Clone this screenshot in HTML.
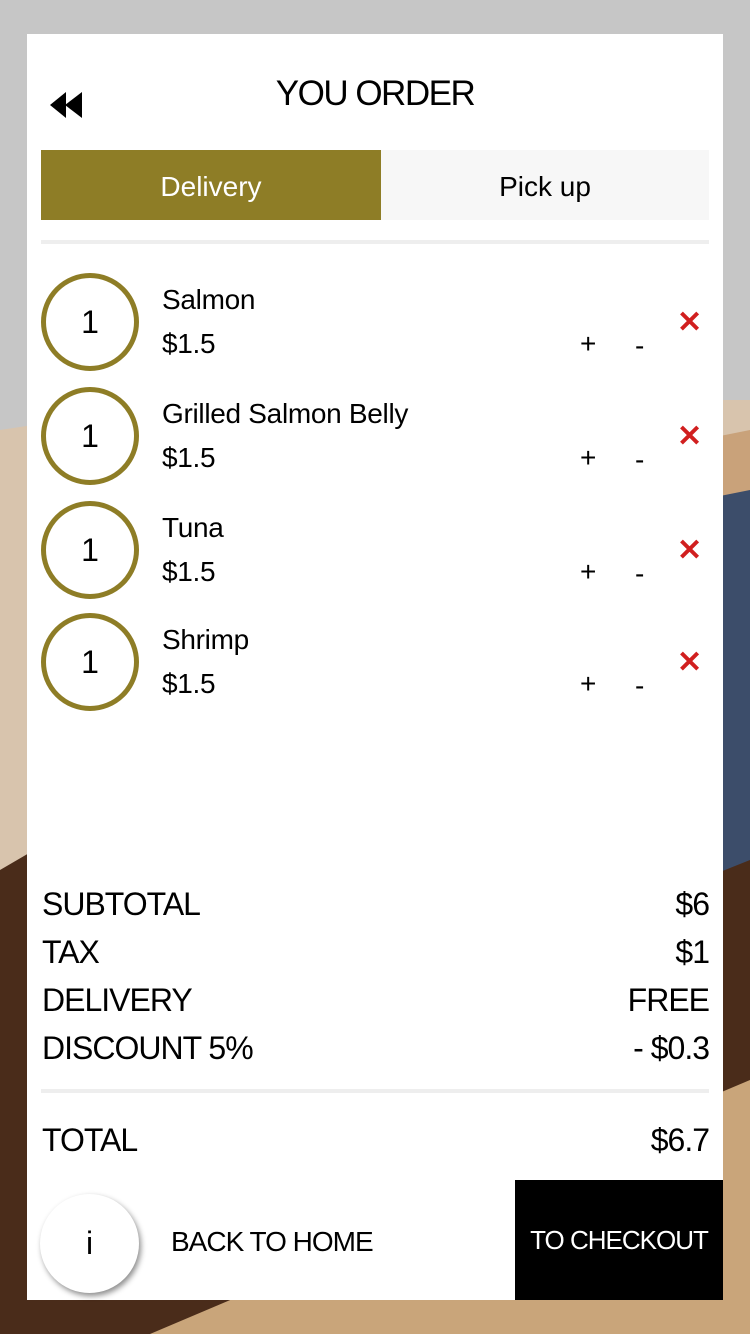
<!DOCTYPE html>
<html><head><meta charset="utf-8"><style>
*{margin:0;padding:0;box-sizing:border-box}
body{width:750px;height:1334px;position:relative;overflow:hidden;background:#c6c6c6;font-family:"Liberation Sans",sans-serif;color:#000}
.bg{position:absolute;left:0;top:0;width:750px;height:1334px}
.card{position:absolute;left:27px;top:34px;width:696px;height:1266px;background:#fff}
.t{position:absolute;white-space:nowrap;line-height:1}
.circ{position:absolute;left:14px;width:98px;height:98px;border:5px solid #8e7d26;border-radius:50%;font-size:32px;display:flex;align-items:center;justify-content:center}
.x{color:#d11f1f;font-size:30px;font-weight:bold}
.s{font-size:32px;letter-spacing:-1px}
.n{font-size:28px;letter-spacing:-0.3px}
</style></head><body>
<svg class="bg" viewBox="0 0 750 1334">
<polygon points="0,430 200,400 750,400 750,1334 0,1334" fill="#d8c4ad"/>
<polygon points="0,870 120,800 750,700 750,1334 0,1334" fill="#4a2c1a"/>
<polygon points="150,1334 750,1080 750,1334" fill="#c9a57a"/>
<polygon points="700,440 750,430 750,500 700,500" fill="#c9a27a"/>
<polygon points="700,500 750,490 750,860 700,880" fill="#3c4d6a"/>
</svg>
<div class="card">
<svg style="position:absolute;left:23px;top:58px" width="34" height="26" viewBox="0 0 34 26"><polygon points="0,13 16,0 16,26" fill="#000"/><polygon points="15,13 32,0 32,26" fill="#000"/></svg>
<div class="t" style="left:0;width:696px;text-align:center;top:42px;font-size:35px;letter-spacing:-1.5px">YOU ORDER</div>
<div style="position:absolute;left:14px;top:116px;width:340px;height:70px;padding-top:4px;background:#8e7d26;color:#fff;font-size:28px;display:flex;align-items:center;justify-content:center">Delivery</div>
<div style="position:absolute;left:354px;top:116px;width:328px;height:70px;padding-top:4px;background:#f7f7f7;font-size:28px;display:flex;align-items:center;justify-content:center">Pick up</div>
<div style="position:absolute;left:14px;top:206px;width:668px;height:4px;background:#eee"></div>

<div class="circ" style="top:239px">1</div>
<div class="t n" style="left:135px;top:252px">Salmon</div>
<div class="t n" style="left:135px;top:296px">$1.5</div>
<div class="t n" style="left:553px;top:296px">+</div>
<div class="t n" style="left:608px;top:298px">-</div>
<div class="t x" style="left:650px;top:274px">✕</div>

<div class="circ" style="top:353px">1</div>
<div class="t n" style="left:135px;top:366px">Grilled Salmon Belly</div>
<div class="t n" style="left:135px;top:410px">$1.5</div>
<div class="t n" style="left:553px;top:410px">+</div>
<div class="t n" style="left:608px;top:412px">-</div>
<div class="t x" style="left:650px;top:388px">✕</div>

<div class="circ" style="top:467px">1</div>
<div class="t n" style="left:135px;top:480px">Tuna</div>
<div class="t n" style="left:135px;top:524px">$1.5</div>
<div class="t n" style="left:553px;top:524px">+</div>
<div class="t n" style="left:608px;top:526px">-</div>
<div class="t x" style="left:650px;top:502px">✕</div>

<div class="circ" style="top:579px">1</div>
<div class="t n" style="left:135px;top:592px">Shrimp</div>
<div class="t n" style="left:135px;top:636px">$1.5</div>
<div class="t n" style="left:553px;top:636px">+</div>
<div class="t n" style="left:608px;top:638px">-</div>
<div class="t x" style="left:650px;top:614px">✕</div>

<div class="t s" style="left:15px;top:854px">SUBTOTAL</div><div class="t s" style="right:14px;top:854px">$6</div>
<div class="t s" style="left:15px;top:902px">TAX</div><div class="t s" style="right:14px;top:902px">$1</div>
<div class="t s" style="left:15px;top:950px">DELIVERY</div><div class="t s" style="right:14px;top:950px">FREE</div>
<div class="t s" style="left:15px;top:998px">DISCOUNT 5%</div><div class="t s" style="right:14px;top:998px">- $0.3</div>
<div style="position:absolute;left:14px;top:1055px;width:668px;height:4px;background:#eee"></div>
<div class="t s" style="left:15px;top:1090px">TOTAL</div><div class="t s" style="right:14px;top:1090px">$6.7</div>

<div style="position:absolute;left:488px;top:1146px;width:208px;height:120px;background:#000;color:#fff;font-size:26px;letter-spacing:-1px;white-space:nowrap;display:flex;align-items:center;justify-content:center">TO CHECKOUT</div>
<div style="position:absolute;left:13px;top:1160px;width:99px;height:99px;border-radius:50%;background:#fff;box-shadow:2px 3px 6px rgba(0,0,0,.45);font-size:32px;display:flex;align-items:center;justify-content:center">i</div>
<div class="t" style="left:144px;top:1194px;font-size:28px;letter-spacing:-1px">BACK TO HOME</div>
</div>
</body></html>
